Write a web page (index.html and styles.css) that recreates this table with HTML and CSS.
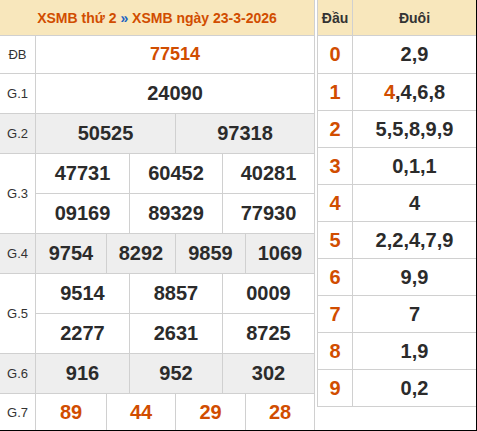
FILE: index.html
```html
<!DOCTYPE html>
<html lang="vi">
<head>
<meta charset="utf-8">
<title>XSMB ngày 23-3-2026</title>
<link rel="stylesheet" href="styles.css">
</head>
<body>
<div class="frame">
  <div class="kq">
    <div class="kq-head">XSMB thứ 2 <span class="sep">»</span> XSMB ngày 23-3-2026</div>
    <div class="row r-db cols-1">
      <div class="cell lbl">ĐB</div>
      <div class="cell num special">77514</div>
    </div>
    <div class="row cols-1">
      <div class="cell lbl">G.1</div>
      <div class="cell num">24090</div>
    </div>
    <div class="row gray cols-2">
      <div class="cell lbl">G.2</div>
      <div class="cell num">50525</div>
      <div class="cell num">97318</div>
    </div>
    <div class="row double cols-3">
      <div class="cell lbl">G.3</div>
      <div class="cell num">47731</div>
      <div class="cell num">60452</div>
      <div class="cell num">40281</div>
      <div class="cell num">09169</div>
      <div class="cell num">89329</div>
      <div class="cell num">77930</div>
    </div>
    <div class="row gray cols-4">
      <div class="cell lbl">G.4</div>
      <div class="cell num">9754</div>
      <div class="cell num">8292</div>
      <div class="cell num">9859</div>
      <div class="cell num">1069</div>
    </div>
    <div class="row double cols-3">
      <div class="cell lbl">G.5</div>
      <div class="cell num">9514</div>
      <div class="cell num">8857</div>
      <div class="cell num">0009</div>
      <div class="cell num">2277</div>
      <div class="cell num">2631</div>
      <div class="cell num">8725</div>
    </div>
    <div class="row gray cols-3">
      <div class="cell lbl">G.6</div>
      <div class="cell num">916</div>
      <div class="cell num">952</div>
      <div class="cell num">302</div>
    </div>
    <div class="row r-last cols-4">
      <div class="cell lbl">G.7</div>
      <div class="cell num special">89</div>
      <div class="cell num special">44</div>
      <div class="cell num special">29</div>
      <div class="cell num special">28</div>
    </div>
  </div>

  <div class="lt">
    <div class="lt-row lt-head"><div class="lt-c">Đầu</div><div class="lt-c">Đuôi</div></div>
    <div class="lt-row lt-first"><div class="lt-c dau">0</div><div class="lt-c duoi">2,9</div></div>
    <div class="lt-row"><div class="lt-c dau">1</div><div class="lt-c duoi"><span class="hl">4</span>,4,6,8</div></div>
    <div class="lt-row"><div class="lt-c dau">2</div><div class="lt-c duoi">5,5,8,9,9</div></div>
    <div class="lt-row"><div class="lt-c dau">3</div><div class="lt-c duoi">0,1,1</div></div>
    <div class="lt-row"><div class="lt-c dau">4</div><div class="lt-c duoi">4</div></div>
    <div class="lt-row"><div class="lt-c dau">5</div><div class="lt-c duoi">2,2,4,7,9</div></div>
    <div class="lt-row"><div class="lt-c dau">6</div><div class="lt-c duoi">9,9</div></div>
    <div class="lt-row"><div class="lt-c dau">7</div><div class="lt-c duoi">7</div></div>
    <div class="lt-row"><div class="lt-c dau">8</div><div class="lt-c duoi">1,9</div></div>
    <div class="lt-row"><div class="lt-c dau">9</div><div class="lt-c duoi">0,2</div></div>
  </div>
</div>
</body>
</html>
```

FILE: styles.css
```css
* { box-sizing: border-box; }
html, body { margin: 0; padding: 0; background: #fff; }
body { font-family: "Liberation Sans", Arial, sans-serif; color: #333; }

.frame {
  width: 477px;
  height: 431px;
  display: flex;
  align-items: flex-start;
  gap: 2px;
  border-right: 1px solid #000;
  border-bottom: 1px solid #000;
  overflow: hidden;
}

/* left result table */
.kq {
  width: 315px;
  flex: none;
  border-right: 1px solid #d0d0d0;
  display: flex;
  flex-direction: column;
}
.kq-head {
  height: 36px;
  background: #f8e7bc;
  border-bottom: 1px solid #d0d0d0;
  display: flex;
  align-items: center;
  justify-content: center;
  font-size: 14px;
  font-weight: bold;
  color: #d14d00;
  white-space: pre;
}
.kq-head .sep { color: #1d63c2; }

.row { display: grid; }
.row.gray { background: #eeeeee; }
.cols-1 { grid-template-columns: 36px 278px; }
.cols-2 { grid-template-columns: 36px 140px 138px; }
.cols-3 { grid-template-columns: 36px 94px 93px 91px; }
.cols-4 { grid-template-columns: 36px 71px 69px 70px 68px; }
.row { grid-auto-rows: 40px; }
.row.r-db { grid-auto-rows: 38px; }
.row.r-last { grid-auto-rows: 36px; }
.row.double .lbl { grid-row: span 2; }

.cell {
  display: flex;
  align-items: center;
  justify-content: center;
  border-bottom: 1px solid #d0d0d0;
}
.row .cell:not(:last-child) { border-right: 1px solid #d0d0d0; }
.row.double .cell:nth-child(4),
.row.double .cell:nth-child(7) { border-right: 0; }
.row.r-last .cell { border-bottom: 0; }

.lbl { font-size: 13px; color: #333; }
.num { font-size: 20px; font-weight: bold; color: #2b2b2b; }
.num.special { color: #d14d00; }
.r-db .num { font-size: 18px; }

/* right loto table */
.lt {
  width: 159px;
  flex: none;
  border-left: 1px solid #d0d0d0;
}
.lt-row {
  display: grid;
  grid-template-columns: 35px 1fr;
  height: 37px;
  border-bottom: 1px solid #d0d0d0;
}
.lt-row.lt-head { height: 36px; background: #f8e7bc; }
.lt-row.lt-first { height: 38px; }
.lt-c {
  display: flex;
  align-items: center;
  justify-content: center;
}
.lt-c:first-child { border-right: 1px solid #d0d0d0; }
.lt-head .lt-c { font-size: 14px; font-weight: bold; color: #333; }
.dau { font-size: 20px; font-weight: bold; color: #d14d00; }
.duoi { font-size: 20px; font-weight: bold; color: #2b2b2b; }
.duoi .hl { color: #d14d00; }
```
